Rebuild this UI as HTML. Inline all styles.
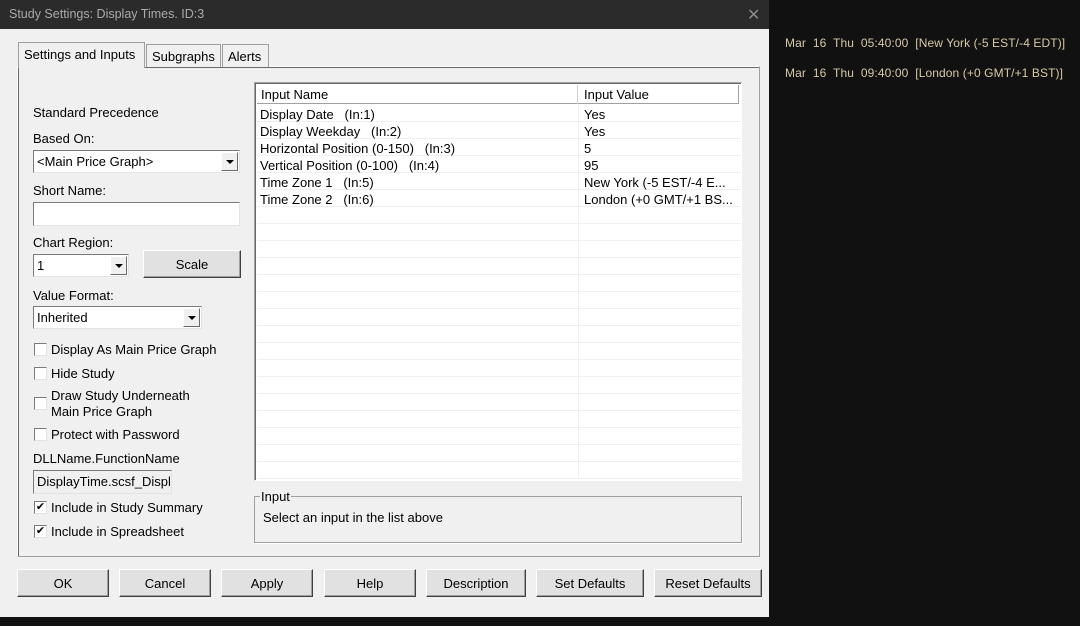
<!DOCTYPE html>
<html><head><meta charset="utf-8"><style>
*{box-sizing:border-box;margin:0;padding:0}
body{width:1080px;height:626px;background:#111;position:relative;overflow:hidden;font-family:"Liberation Sans",sans-serif;font-size:13px;color:#000}
.a{position:absolute}
.dlg{left:0;top:0;width:769px;height:617px;background:#f0f0f0}
.title{left:0;top:0;width:769px;height:29px;background:#2b2b2b;color:#aaa;font-size:12.5px;padding:7px 0 0 9px}
.panel{left:17px;top:66px;width:743px;height:491px;border:1px solid #a0a0a0;border-top-color:#fff;border-left-color:#fff;box-shadow:1px 1px 0 #696969 inset}
.tab{top:44px;height:23px;border:1px solid #a0a0a0;border-bottom:none;background:#f0f0f0;padding:4px 5px 0}
.lbl{font-size:13px}
.edit{background:#fff;border:1px solid #7a7a7a;border-right-color:#e3e3e3;border-bottom-color:#e3e3e3;padding:2px 3px}
.combo{background:#fff;border:1px solid #7a7a7a;border-right-color:#e3e3e3;border-bottom-color:#e3e3e3;padding:3px 3px}
.arr{position:absolute;right:1px;top:1px;width:17px;bottom:1px;background:#f0f0f0;border:1px solid #fff;border-right-color:#696969;border-bottom-color:#696969}
.arr:after{content:"";position:absolute;left:4px;top:7px;border-left:4px solid transparent;border-right:4px solid transparent;border-top:4px solid #000}
.btn{background:#e1e1e1;border:1px solid #fff;border-right-color:#404040;border-bottom-color:#404040;box-shadow:inset -1px -1px 0 #a0a0a0;text-align:center;padding-top:6px;height:28px}
.cb{width:13px;height:13px;background:#fff;border:1px solid #7a7a7a;border-right-color:#e3e3e3;border-bottom-color:#e3e3e3}
.list{left:254px;top:82px;width:488px;height:399px;background:#fff;border:1px solid #a0a0a0;border-right-color:#fff;border-bottom-color:#fff;box-shadow:inset 1px 1px 0 #696969}
.row{position:absolute;left:2px;width:484px;height:17px;border-bottom:1px solid #f0f0f0}
.row span{position:absolute;top:2px}
</style></head><body>
<div class="a dlg"></div>
<div class="a title">Study Settings: Display Times. ID:3</div>
<div class="a" style="left:747px;top:5px;color:#8a8a8a;font-size:16px">✕</div>
<div class="a panel"></div>
<div class="a tab" style="left:146px;width:75px">Subgraphs</div>
<div class="a tab" style="left:222px;width:47px">Alerts</div>
<div class="a tab" style="left:18px;top:42px;height:26px;width:127px;border-bottom:none;z-index:2;padding-top:4px">Settings and Inputs</div>

<div class="a lbl" style="left:33px;top:105px">Standard Precedence</div>
<div class="a lbl" style="left:33px;top:131px">Based On:</div>
<div class="a combo" style="left:33px;top:150px;width:207px;height:23px">&lt;Main Price Graph&gt;<div class="arr"></div></div>
<div class="a lbl" style="left:33px;top:183px">Short Name:</div>
<div class="a edit" style="left:33px;top:202px;width:207px;height:24px"></div>
<div class="a lbl" style="left:33px;top:235px">Chart Region:</div>
<div class="a combo" style="left:33px;top:254px;width:96px;height:23px">1<div class="arr"></div></div>
<div class="a btn" style="left:143px;top:250px;width:98px;height:28px;background:#e1e1e1">Scale</div>
<div class="a lbl" style="left:33px;top:288px">Value Format:</div>
<div class="a combo" style="left:33px;top:306px;width:169px;height:23px">Inherited<div class="arr"></div></div>
<div class="a cb" style="left:34px;top:343px"></div><div class="a lbl" style="left:51px;top:342px">Display As Main Price Graph</div>
<div class="a cb" style="left:34px;top:367px"></div><div class="a lbl" style="left:51px;top:366px">Hide Study</div>
<div class="a cb" style="left:34px;top:397px"></div><div class="a lbl" style="left:51px;top:388px;line-height:16px">Draw Study Underneath<br>Main Price Graph</div>
<div class="a cb" style="left:34px;top:428px"></div><div class="a lbl" style="left:51px;top:427px">Protect with Password</div>
<div class="a lbl" style="left:33px;top:451px">DLLName.FunctionName</div>
<div class="a edit" style="left:33px;top:470px;width:139px;height:24px;background:#f0f0f0;overflow:hidden;white-space:nowrap;padding-top:3px">DisplayTime.scsf_DisplayTimes</div>
<div class="a cb" style="left:34px;top:501px;font-size:11px;line-height:10px;text-align:center">✔</div><div class="a lbl" style="left:51px;top:500px">Include in Study Summary</div>
<div class="a cb" style="left:34px;top:525px;font-size:11px;line-height:10px;text-align:center">✔</div><div class="a lbl" style="left:51px;top:524px">Include in Spreadsheet</div>

<div class="a list">
<div class="a" style="left:2px;top:2px;width:482px;height:19px;background:#fff;border-bottom:1px solid #a0a0a0"></div>
<div class="a" style="left:6px;top:4px">Input Name</div>
<div class="a" style="left:322px;top:2px;width:1px;height:19px;background:#d0d0d0"></div>
<div class="a" style="left:329px;top:4px">Input Value</div>
<div class="a" style="left:483px;top:2px;width:1px;height:19px;background:#a0a0a0"></div>
<div class="a" style="left:323px;top:21px;width:1px;height:374px;background:#f0f0f0"></div>
<div class="row" style="top:22px"><span style="left:3px">Display Date &nbsp; (In:1)</span><span style="left:327px">Yes</span></div>
<div class="row" style="top:39px"><span style="left:3px">Display Weekday &nbsp; (In:2)</span><span style="left:327px">Yes</span></div>
<div class="row" style="top:56px"><span style="left:3px">Horizontal Position (0-150) &nbsp; (In:3)</span><span style="left:327px">5</span></div>
<div class="row" style="top:73px"><span style="left:3px">Vertical Position (0-100) &nbsp; (In:4)</span><span style="left:327px">95</span></div>
<div class="row" style="top:90px"><span style="left:3px">Time Zone 1 &nbsp; (In:5)</span><span style="left:327px">New York (-5 EST/-4 E...</span></div>
<div class="row" style="top:107px"><span style="left:3px">Time Zone 2 &nbsp; (In:6)</span><span style="left:327px">London (+0 GMT/+1 BS...</span></div>
<div class="row" style="top:124px"></div><div class="row" style="top:141px"></div><div class="row" style="top:158px"></div><div class="row" style="top:175px"></div><div class="row" style="top:192px"></div><div class="row" style="top:209px"></div><div class="row" style="top:226px"></div><div class="row" style="top:243px"></div><div class="row" style="top:260px"></div><div class="row" style="top:277px"></div><div class="row" style="top:294px"></div><div class="row" style="top:311px"></div><div class="row" style="top:328px"></div><div class="row" style="top:345px"></div><div class="row" style="top:362px"></div><div class="row" style="top:379px"></div>
</div>

<div class="a" style="left:254px;top:496px;width:488px;height:47px;border:1px solid #a0a0a0;box-shadow:1px 1px 0 #fff"></div>
<div class="a" style="left:260px;top:489px;background:#f0f0f0;padding:0 1px">Input</div>
<div class="a" style="left:263px;top:510px">Select an input in the list above</div>

<div class="a btn" style="left:17px;top:569px;width:92px">OK</div>
<div class="a btn" style="left:119px;top:569px;width:92px">Cancel</div>
<div class="a btn" style="left:221px;top:569px;width:92px">Apply</div>
<div class="a btn" style="left:324px;top:569px;width:92px">Help</div>
<div class="a btn" style="left:426px;top:569px;width:100px">Description</div>
<div class="a btn" style="left:536px;top:569px;width:108px">Set Defaults</div>
<div class="a btn" style="left:654px;top:569px;width:108px">Reset Defaults</div>

<div class="a" style="left:785px;top:36px;color:#d8c9a8;font-size:12px;white-space:pre;letter-spacing:0.1px">Mar  16  Thu  05:40:00  [New York (-5 EST/-4 EDT)]</div>
<div class="a" style="left:785px;top:66px;color:#d8c9a8;font-size:12px;white-space:pre;letter-spacing:0.1px">Mar  16  Thu  09:40:00  [London (+0 GMT/+1 BST)]</div>
</body></html>
